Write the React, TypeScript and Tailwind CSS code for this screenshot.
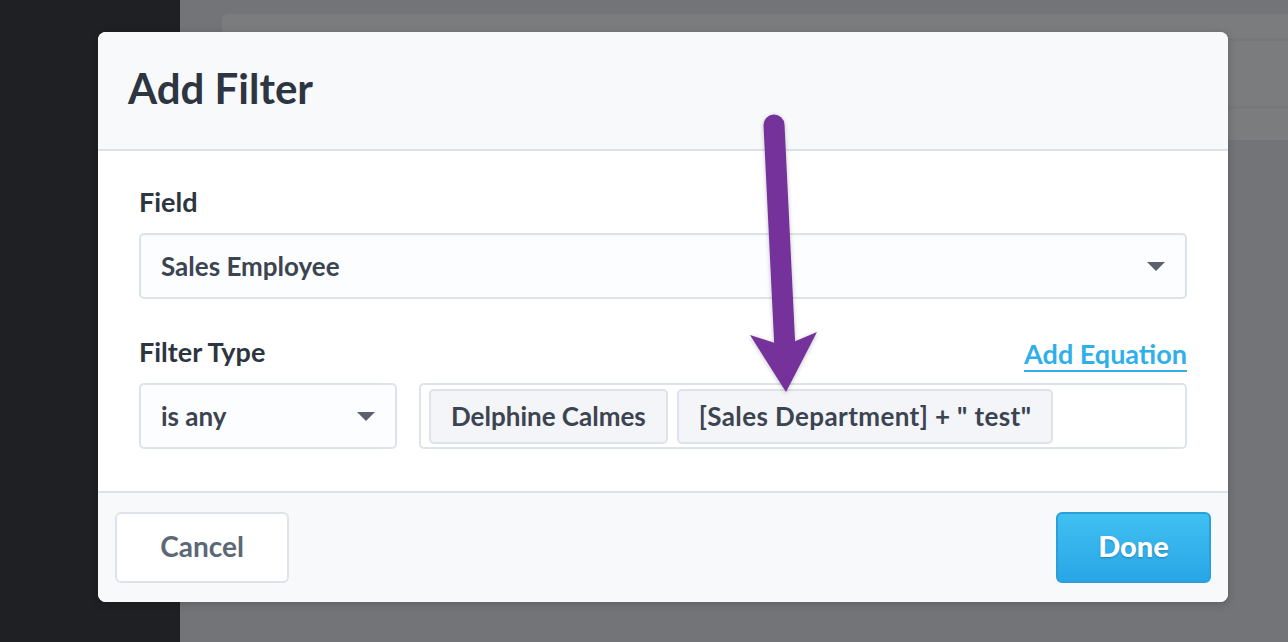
import React from "react";

const font = { fontFamily: "Lato, 'Noto Sans', sans-serif" };

function Caret() {
  return (
    <svg width="18" height="9" viewBox="0 0 18 9" className="shrink-0">
      <path d="M0 0 L18 0 L9 9 Z" fill="#5b606b" />
    </svg>
  );
}

function Tag({ children, wide }: { children: React.ReactNode; wide?: boolean }) {
  return (
    <div
      className={
        wide
          ? "flex h-[55px] items-center rounded-[5px] border-2 border-[#dde3ea] bg-[#f3f5f8] px-[20px] text-[26px] font-bold tracking-[0.4px] text-[#3b4450]"
          : "flex h-[55px] items-center rounded-[5px] border-2 border-[#dde3ea] bg-[#f3f5f8] px-[20px] text-[26px] font-bold text-[#3b4450]"
      }
    >
      {children}
    </div>
  );
}

function Arrow() {
  return (
    <svg className="pointer-events-none absolute left-0 top-0" width="1288" height="642" viewBox="0 0 1288 642">
      <defs>
        <filter id="sh" x="-50%" y="-50%" width="200%" height="200%">
          <feDropShadow dx="0" dy="1" stdDeviation="2" floodColor="#000" floodOpacity="0.25" />
        </filter>
      </defs>
      <g filter="url(#sh)" fill="#74329a">
        <path d="M774 125 L785 350" stroke="#74329a" strokeWidth="21" strokeLinecap="round" />
        <path d="M750 335 L784 346 L817 332 L786 392 Z" />
      </g>
    </svg>
  );
}

export default function App() {
  return (
    <div className="relative h-[642px] w-full overflow-hidden" style={font}>
      <div className="flex h-full">
        <aside className="w-[180px] shrink-0 bg-[#1f2023]" />
        <main className="flex-1 bg-[#737477] pt-[14px] pl-[42px]">
          <div className="h-[126px] rounded-tl-[6px] bg-[#7b7c7e]">
            <div className="h-[27px] border-b-[3px] border-[#77787a]" />
            <div className="h-[68px] border-b-[3px] border-[#77787a]" />
          </div>
        </main>
      </div>

      <div className="absolute left-[98px] top-[32px] flex w-[1130px] flex-col overflow-hidden rounded-[8px] bg-white shadow-[0_2px_10px_rgba(0,0,0,0.2)]">
        <header className="flex h-[119px] items-start border-b-2 border-[#dde2ea] bg-[#f8f9fb] pl-[30px] pt-[30px]">
          <h1 className="text-[42px] font-bold leading-[52px] text-[#2d3540]">Add Filter</h1>
        </header>

        <section className="flex flex-col bg-white px-[41px] pb-[42px] pt-[34px]">
          <label className="text-[27px] font-bold leading-[34px] text-[#2d3540]">Field</label>
          <div className="mt-[14px] flex h-[66px] items-center justify-between rounded-[5px] border-2 border-[#dde3ea] bg-[#fcfdfe] pl-[20px] pr-[20px] shadow-[inset_0_1px_2px_rgba(0,0,0,0.03)]">
            <span className="text-[26px] font-bold text-[#3b4450]">Sales Employee</span>
            <Caret />
          </div>

          <div className="mt-[36px] flex items-end justify-between">
            <label className="text-[27px] font-bold leading-[34px] text-[#2d3540]">Filter Type</label>
            <a className="mb-[-3px] border-b-2 border-[#2fb0ea] text-[27px] font-bold leading-[32px] text-[#2fb0ea]">Add Equation</a>
          </div>

          <div className="mt-[14px] flex gap-[22px]">
            <div className="flex h-[66px] w-[258px] items-center justify-between rounded-[5px] border-2 border-[#dde3ea] bg-[#fcfdfe] pl-[20px] pr-[20px]">
              <span className="text-[26px] font-bold text-[#3b4450]">is any</span>
              <Caret />
            </div>
            <div className="flex h-[66px] flex-1 items-center gap-[9px] rounded-[5px] border-2 border-[#dde3ea] bg-white pl-[8px]">
              <Tag>Delphine Calmes</Tag>
              <Tag wide>[Sales Department] + " test"</Tag>
            </div>
          </div>
        </section>

        <footer className="flex h-[111px] items-center justify-between border-t-2 border-[#dde2ea] bg-[#f8f9fb] pl-[17px] pr-[17px]">
          <button className="flex h-[71px] w-[174px] items-center justify-center rounded-[6px] border-2 border-[#dde3ea] bg-white pb-[3px] text-[28px] font-bold text-[#5d6877]">
            Cancel
          </button>
          <button className="flex h-[71px] w-[155px] items-center justify-center rounded-[6px] border-2 border-[#2a9fd8] bg-gradient-to-b from-[#40c0f2] to-[#28a6e6] pb-[3px] text-[29px] font-black text-white [text-shadow:0_1px_2px_rgba(0,0,0,0.25)]">
            Done
          </button>
        </footer>
      </div>

      <Arrow />
    </div>
  );
}
